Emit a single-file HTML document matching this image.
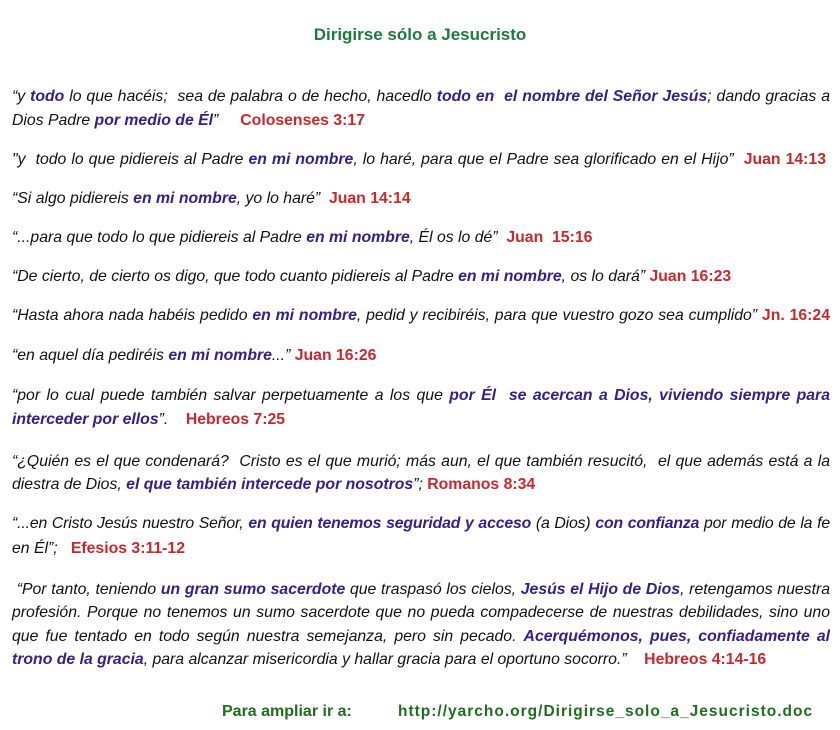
<!DOCTYPE html>
<html><head><meta charset="utf-8"><style>
body{margin:0;width:840px;height:730px;background:#fff;position:relative;overflow:hidden;font-family:"Liberation Sans",sans-serif;}
.l{position:absolute;left:12px;width:818px;font-size:15.8px;font-style:italic;color:#111;white-space:nowrap;line-height:18px;}
.j{text-align:justify;text-align-last:justify;}
b{color:#35208a;font-weight:bold;}
.r{color:#c8282c;font-weight:bold;font-style:normal;}
.t{position:absolute;top:25px;left:0;width:840px;text-align:center;color:#1f7a3f;font-size:17px;font-weight:bold;}
.f{position:absolute;top:703px;font-size:15.5px;font-weight:bold;color:#1d6e1d;}
</style></head><body>
<div class="t">Dirigirse sólo a Jesucristo</div>
<div class="l j" style="top:88px">“y <b>todo</b> lo que hacéis; &nbsp;sea de palabra o de hecho, hacedlo <b>todo en &nbsp;el nombre del Señor Jesús</b>; dando gracias a</div>
<div class="l" style="top:112px">Dios Padre <b>por medio de Él</b>” &nbsp;&nbsp;&nbsp;&nbsp;<span class="r">Colosenses 3:17</span></div>
<div class="l j" style="top:151px;width:814px">"y &nbsp;todo lo que pidiereis al Padre <b>en mi nombre</b>, lo haré, para que el Padre sea glorificado en el Hijo” &nbsp;<span class="r">Juan 14:13</span></div>
<div class="l" style="top:190px">“Si algo pidiereis <b>en mi nombre</b>, yo lo haré” &nbsp;<span class="r">Juan 14:14</span></div>
<div class="l" style="top:229px">“...para que todo lo que pidiereis al Padre <b>en mi nombre</b>, Él os lo dé” &nbsp;<span class="r">Juan &nbsp;15:16</span></div>
<div class="l" style="top:268px">“De cierto, de cierto os digo, que todo cuanto pidiereis al Padre <b>en mi nombre</b>, os lo dará” <span class="r">Juan 16:23</span></div>
<div class="l j" style="top:307px">“Hasta ahora nada habéis pedido <b>en mi nombre</b>, pedid y recibiréis, para que vuestro gozo sea cumplido” <span class="r">Jn. 16:24</span></div>
<div class="l" style="top:347px">“en aquel día pediréis <b>en mi nombre</b>...” <span class="r">Juan 16:26</span></div>
<div class="l j" style="top:387px">“por lo cual puede también salvar perpetuamente a los que <b>por Él &nbsp;se acercan a Dios, viviendo siempre para</b></div>
<div class="l" style="top:411px"><b>interceder por ellos</b>”. &nbsp;&nbsp;&nbsp;<span class="r">Hebreos 7:25</span></div>
<div class="l j" style="top:453px">“¿Quién es el que condenará? &nbsp;Cristo es el que murió; más aun, el que también resucitó, &nbsp;el que además está a la</div>
<div class="l" style="top:476px">diestra de Dios, <b>el que también intercede por nosotros</b>”; <span class="r">Romanos 8:34</span></div>
<div class="l j" style="top:515px;letter-spacing:-0.15px">“...en Cristo Jesús nuestro Señor, <b>en quien tenemos seguridad y acceso</b> (a Dios) <b>con confianza</b> por medio de la fe</div>
<div class="l" style="top:540px">en Él”; &nbsp;&nbsp;<span class="r">Efesios 3:11-12</span></div>
<div class="l j" style="top:581px">&nbsp;“Por tanto, teniendo <b>un gran sumo sacerdote</b> que traspasó los cielos, <b>Jesús el Hijo de Dios</b>, retengamos nuestra</div>
<div class="l j" style="top:604px">profesión. Porque no tenemos un sumo sacerdote que no pueda compadecerse de nuestras debilidades, sino uno</div>
<div class="l j" style="top:628px">que fue tentado en todo según nuestra semejanza, pero sin pecado. <b>Acerquémonos, pues, confiadamente al</b></div>
<div class="l" style="top:651px"><b>trono de la gracia</b>, para alcanzar misericordia y hallar gracia para el oportuno socorro.” &nbsp;&nbsp;&nbsp;<span class="r">Hebreos 4:14-16</span></div>
<div class="f" style="left:222px;font-size:16px">Para ampliar ir a:</div>
<div class="f" style="left:398px;letter-spacing:1px">http://yarcho.org/Dirigirse_solo_a_Jesucristo.doc</div>
</body></html>
